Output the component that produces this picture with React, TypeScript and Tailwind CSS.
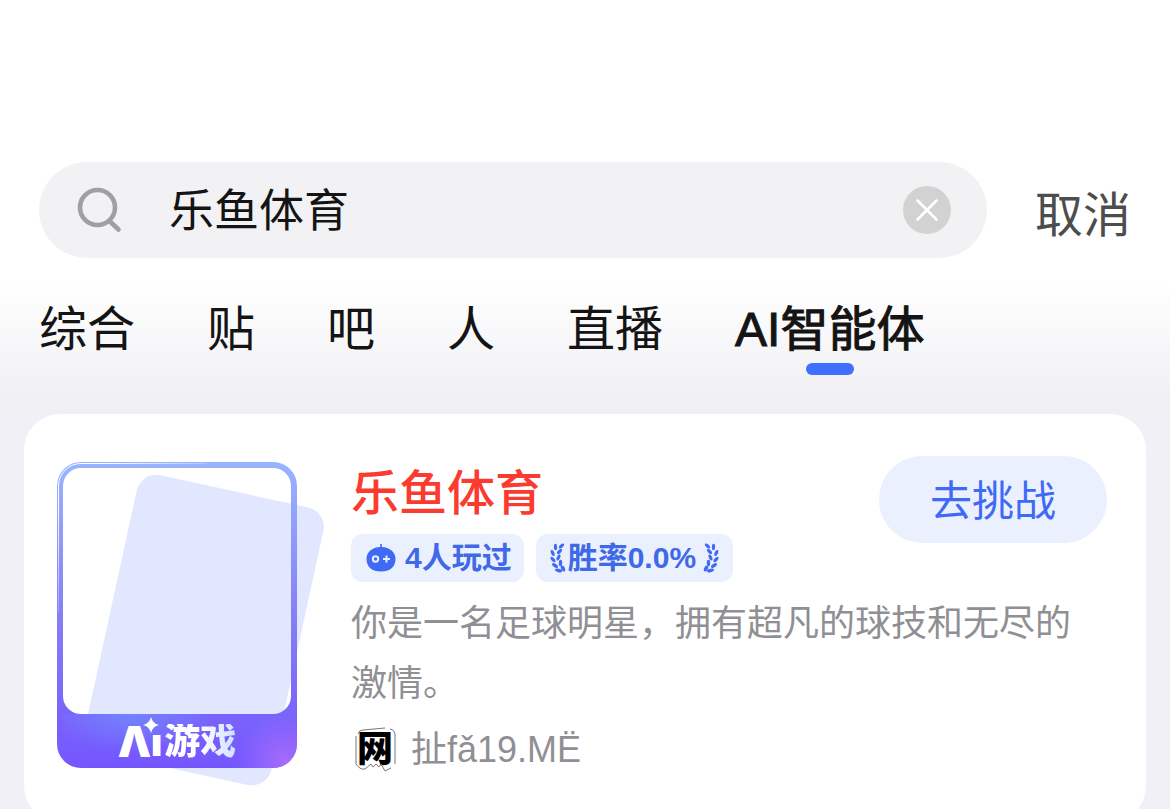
import { useState } from 'react';

const tabs = ['综合', '贴', '吧', '人', '直播', 'AI智能体'];

function SearchIcon() {
    return (
        <svg className="h-12 w-12 shrink-0" viewBox="0 0 48 48" fill="none" stroke="#a0a0a2" strokeWidth="4.6" strokeLinecap="round">
            <circle cx="22.500" cy="21.500" r="17.5" />
            <path d="M34.5 35 L43.500 43.500" />
        </svg>
    );
}

function RobotIcon() {
    return (
        <svg className="h-8 w-8 shrink-0" viewBox="0 0 32 32">
            <path d="M15.200 2h1.600v3c8 .5 13.700 5 13.700 12C30.500 25 25 29.500 16 29.500S1.500 25 1.500 17C1.500 10 7 5.500 15.200 5z" fill="#4069f5" />
            <circle cx="10.500" cy="17" r="2.700" fill="none" stroke="#eaf0fe" strokeWidth="2" />
            <path d="M21.500 13.500v7M18 17h7" stroke="#eaf0fe" strokeWidth="2" />
        </svg>
    );
}

function LaurelIcon({ flip }: { flip?: boolean }) {
    return (
        <svg className="h-8 w-4 shrink-0" viewBox="0 0 16 32" fill="#4069f5">
            <g transform={flip ? 'translate(16 0) scale(-1 1)' : undefined}>
                <ellipse cx="11.500" cy="4" rx="1.600" ry="3.200" transform="rotate(48 11.500 4)" />
                <ellipse cx="5.500" cy="5" rx="1.600" ry="3.200" transform="rotate(-2 5.500 5)" />
                <ellipse cx="9.500" cy="9.500" rx="1.600" ry="3.200" transform="rotate(45 9.500 9.500)" />
                <ellipse cx="2.700" cy="11" rx="1.600" ry="3.200" transform="rotate(-25 2.700 11)" />
                <ellipse cx="8.500" cy="15.500" rx="1.600" ry="3.200" transform="rotate(25 8.500 15.500)" />
                <ellipse cx="3" cy="17.500" rx="1.600" ry="3.200" transform="rotate(-45 3 17.500)" />
                <ellipse cx="10.500" cy="21" rx="1.700" ry="3.200" transform="rotate(2 10.500 21)" />
                <ellipse cx="5" cy="23.500" rx="1.700" ry="3.400" transform="rotate(-55 5 23.500)" />
                <ellipse cx="13" cy="26.500" rx="1.900" ry="3.200" transform="rotate(-25 13 26.500)" />
                <ellipse cx="8.500" cy="28.500" rx="1.700" ry="3.600" transform="rotate(-75 8.500 28.500)" />
            </g>
        </svg>
    );
}

function GameCover() {
    return (
        <div className="relative h-[306px] w-60 shrink-0">
            <svg className="absolute top-0 left-0 h-[330px] w-[280px]" viewBox="0 0 280 330">
                <defs>
                    <linearGradient id="frame" x1="0" y1="0" x2="0" y2="1">
                        <stop offset="0" stopColor="#98b4ff" />
                        <stop offset="0.200" stopColor="#939ffb" />
                        <stop offset="0.500" stopColor="#857ff6" />
                        <stop offset="1" stopColor="#7456ff" />
                    </linearGradient>
                    <linearGradient id="shine" x1="0" y1="0" x2="230" y2="230" gradientUnits="userSpaceOnUse">
                        <stop offset="0.100" stopColor="#fff" />
                        <stop offset="0.400" stopColor="#fff" stopOpacity="0" />
                    </linearGradient>
                    <radialGradient id="blueGlow" cx="76" cy="250" r="80" gradientUnits="userSpaceOnUse" gradientTransform="matrix(1 0 0 .5 0 125)">
                        <stop offset="0" stopColor="#7384ff" />
                        <stop offset="1" stopColor="#7384ff" stopOpacity="0" />
                    </radialGradient>
                    <radialGradient id="pinkGlow" cx="228" cy="300" r="48" gradientUnits="userSpaceOnUse">
                        <stop offset="0" stopColor="#a56cfa" />
                        <stop offset="1" stopColor="#a56cfa" stopOpacity="0" />
                    </radialGradient>
                </defs>
                <rect x="84" y="9" width="191" height="284" rx="20" fill="#e1e7fe" transform="rotate(12.300 84 9)" />
                <path fillRule="evenodd" fill="url(#frame)" d="M24 0H216A24 24 0 0 1 240 24V282A24 24 0 0 1 216 306H24A24 24 0 0 1 0 282V24A24 24 0 0 1 24 0ZM24 6A18 18 0 0 0 6 24V234A18 18 0 0 0 24 252H216A18 18 0 0 0 234 234V24A18 18 0 0 0 216 6Z" />
                <path fill="url(#blueGlow)" d="M6 252H234V306H6Z" />
                <path fill="url(#pinkGlow)" d="M150 252H222A18 18 0 0 0 234 240H240V282A24 24 0 0 1 216 306H150Z" />
                <path d="M1.500 150V24A22.500 22.500 0 0 1 24 1.500H150" fill="none" stroke="url(#shine)" strokeWidth="1" />
            </svg>
            <div className="absolute inset-x-0 bottom-0 flex h-[54px] items-center justify-center pt-0.5 text-white">
                <span className="font-['Inter',sans-serif] text-[42px] leading-none font-black">Λ</span>
                <span className="relative mr-0.5 font-['Inter',sans-serif] text-[38px] leading-none font-black">
                    ı
                    <svg className="absolute -top-1.5 -left-2 h-4 w-4" viewBox="0 0 16 16" fill="#fff">
                        <path d="M8 0Q9.500 6.500 16 8Q9.500 9.500 8 16Q6.500 9.500 0 8Q6.500 6.500 8 0Z" />
                    </svg>
                </span>
                <span className="bg-linear-to-r from-white from-50% to-[#cfe0ff] bg-clip-text text-4xl leading-none font-black text-transparent">游戏</span>
            </div>
        </div>
    );
}

function Avatar() {
    return (
        <div className="relative flex h-12 w-12 shrink-0 items-center justify-center">
            <svg className="absolute inset-0 h-12 w-12" viewBox="0 0 48 48" fill="none" stroke="#666" strokeWidth="0.900">
                <path d="M7 8Q8 4 12 4L34 2M39 3Q44 4 44 9L44 38M5 10L5 38Q9 44 14 43L20 38L22 41L25 38L28 41L30 38L34 45L40 42" />
            </svg>
            <span className="text-4xl leading-none font-black text-black">网</span>
        </div>
    );
}

export default function App() {
    const [keyword, setKeyword] = useState('乐鱼体育');
    const [active, setActive] = useState('AI智能体');

    return (
        <div className="h-screen overflow-hidden bg-[#f0f0f6] font-['Liberation_Sans','Noto_Sans_CJK_SC',sans-serif] text-[#141414]">
            <header className="bg-white pt-[162px] pb-6">
                <div className="flex items-center px-[39px]">
                    <label className="flex h-24 min-w-0 flex-1 items-center rounded-full bg-[#f2f2f4] px-9">
                        <SearchIcon />
                        <input
                            aria-label="搜索"
                            className="ml-[46px] min-w-0 flex-1 bg-transparent pt-1 text-[45px] leading-[60px] outline-none"
                            value={keyword}
                            onChange={e => setKeyword(e.target.value)}
                        />
                        <button aria-label="清除" className="flex h-12 w-12 items-center justify-center rounded-full bg-[#d2d2d2]" onClick={() => setKeyword('')}>
                            <svg className="h-6 w-6" viewBox="0 0 24 24" stroke="#fff" strokeWidth="2.600" strokeLinecap="round">
                                <path d="M2.500 2.500L21.500 21.500M21.500 2.500L2.500 21.500" />
                            </svg>
                        </button>
                    </label>
                    <button className="ml-12 pt-3 text-5xl leading-[60px] text-[#4d4d4d]">取消</button>
                </div>
            </header>

            <nav className="flex h-[132px] items-start gap-[72px] bg-linear-to-b from-white to-[#f0f0f4] to-90% pt-[18px] pl-[39px]">
                {tabs.map(tab => (
                    <button
                        key={tab}
                        onClick={() => setActive(tab)}
                        className={tab === active ? 'flex flex-col items-center [-webkit-text-stroke:1px]' : 'flex flex-col items-center'}
                    >
                        <span className="text-5xl leading-[60px]">{tab}</span>
                        {tab === active && <span className="mt-[3px] h-3 w-12 rounded-full bg-[#4070ff]" />}
                    </button>
                ))}
            </nav>

            <main className="px-6">
                <article className="flex items-start rounded-[36px] bg-white pt-12 pr-[39px] pb-12 pl-[33px]">
                    <GameCover />
                    <div className="ml-[54px] min-w-0 flex-1">
                        <div className="flex items-start justify-between">
                            <div>
                                <h2 className="pt-0.5 text-5xl leading-[60px] font-medium text-[#fb3b30]">乐鱼体育</h2>
                                <div className="mt-2.5 flex gap-3 text-3xl font-bold text-[#4069e8]">
                                    <span className="flex h-12 items-center gap-2 rounded-xl bg-[#eaf0fe] pr-3 pl-3.5">
                                        <RobotIcon />
                                        <span>4人玩过</span>
                                    </span>
                                    <span className="flex h-12 items-center rounded-xl bg-[#eaf0fe] px-3.5">
                                        <LaurelIcon />
                                        <span className="mr-[7px] ml-0.5">胜率0.0%</span>
                                        <LaurelIcon flip />
                                    </span>
                                </div>
                            </div>
                            <button className="-mt-1.5 h-[87px] w-[228px] rounded-full bg-[#eaf0fe] pt-1 text-[42px] text-[#4069f5]">去挑战</button>
                        </div>
                        <p className="mt-3 pr-8 text-4xl leading-[60px] text-[#8f8f94]">你是一名足球明星，拥有超凡的球技和无尽的激情。</p>
                        <div className="mt-3 flex items-center gap-3 text-4xl text-[#8f8f94]">
                            <Avatar />
                            <a href="#author">扯fǎ19.MË</a>
                        </div>
                    </div>
                </article>
            </main>
        </div>
    );
}
